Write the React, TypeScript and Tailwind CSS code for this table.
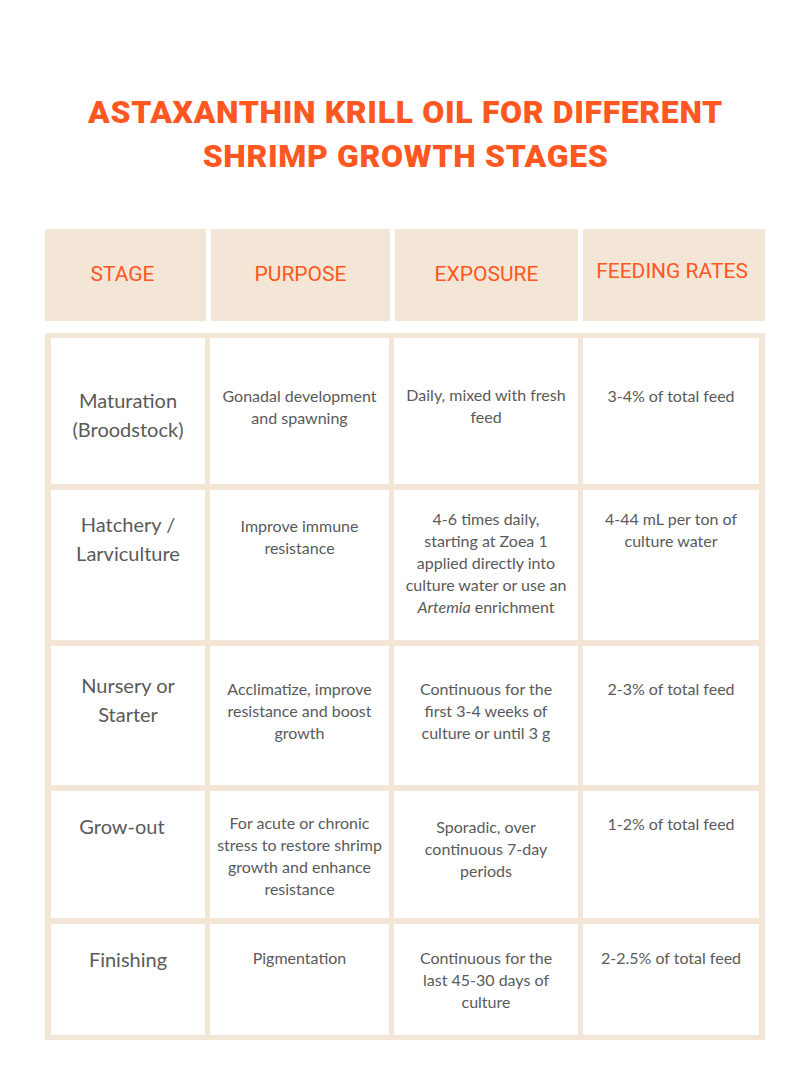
import React from 'react';

type Row = {
  stage: React.ReactNode;
  stagePad: string;
  cells: { text: React.ReactNode; pad: string }[];
  height: string;
};

const rows: Row[] = [
  {
    stage: <>Maturation<br />(Broodstock)</>,
    stagePad: 'pt-[48px]',
    height: 'h-[146px]',
    cells: [
      { text: <>Gonadal development<br />and spawning</>, pad: 'pt-[47px]' },
      { text: <>Daily, mixed with fresh<br />feed</>, pad: 'pt-[46px]' },
      { text: <>3-4% of total feed</>, pad: 'pt-[47px]' },
    ],
  },
  {
    stage: <>Hatchery /<br />Larviculture</>,
    stagePad: 'pt-[20px]',
    height: 'h-[150px]',
    cells: [
      { text: <>Improve immune<br />resistance</>, pad: 'pt-[25px]' },
      {
        text: (
          <>
            4-6 times daily,<br />starting at Zoea 1<br />applied directly into<br />culture water or use an<br />
            <i>Artemia</i> enrichment
          </>
        ),
        pad: 'pt-[18px]',
      },
      { text: <>4-44 mL per ton of<br />culture water</>, pad: 'pt-[18px]' },
    ],
  },
  {
    stage: <>Nursery or<br />Starter</>,
    stagePad: 'pt-[25px]',
    height: 'h-[139px]',
    cells: [
      { text: <>Acclimatize, improve<br />resistance and boost<br />growth</>, pad: 'pt-[32px]' },
      { text: <>Continuous for the<br />first 3-4 weeks of<br />culture or until 3 g</>, pad: 'pt-[32px]' },
      { text: <>2-3% of total feed</>, pad: 'pt-[32px]' },
    ],
  },
  {
    stage: <span className="pr-[12px]">Grow-out</span>,
    stagePad: 'pt-[21px]',
    height: 'h-[127px]',
    cells: [
      {
        text: <>For acute or chronic<br />stress to restore shrimp<br />growth and enhance<br />resistance</>,
        pad: 'pt-[21px]',
      },
      { text: <>Sporadic, over<br />continuous 7-day<br />periods</>, pad: 'pt-[25px]' },
      { text: <>1-2% of total feed</>, pad: 'pt-[22px]' },
    ],
  },
  {
    stage: <>Finishing</>,
    stagePad: 'pt-[21px]',
    height: 'h-[111px]',
    cells: [
      { text: <>Pigmentation</>, pad: 'pt-[23px]' },
      { text: <>Continuous for the<br />last 45-30 days of<br />culture</>, pad: 'pt-[23px]' },
      { text: <>2-2.5% of total feed</>, pad: 'pt-[23px]' },
    ],
  },
];

const headers = [
  { label: 'STAGE', w: 'w-[161px]', extra: 'pr-[6px]' },
  { label: 'PURPOSE', w: 'w-[179px]', extra: '' },
  { label: 'EXPOSURE', w: 'w-[183px]', extra: '' },
  { label: 'FEEDING RATES', w: 'w-[182px]', extra: 'pb-[6px] pr-[4px]' },
];

export default function App() {
  return (
    <main className="w-[800px] h-[1084px] bg-white overflow-hidden">
      <div className="ml-[45px] w-[721px] pt-[90px]">
        <h1 className="text-center text-[32px] leading-[44px] font-black tracking-[0.02em] text-[#ff5722] font-['Roboto',sans-serif]">
          ASTAXANTHIN KRILL OIL FOR DIFFERENT
          <br />
          SHRIMP GROWTH STAGES
        </h1>

        <div className="mt-[51px] flex gap-[5px] h-[92px]">
          {headers.map(h => (
            <div
              key={h.label}
              className={`${h.w} ${h.extra} bg-[#f4e6d7] flex items-center justify-center text-[21px] text-[#ff5722] font-['Roboto',sans-serif]`}
            >
              {h.label}
            </div>
          ))}
        </div>

        <div className="mt-[12px] w-[720px] bg-[#f4e6d7] pt-[5px] pb-[5px] pl-[6px] pr-[5px] flex flex-col gap-[6px] text-[#5a5a5a] font-['Lato',sans-serif]">
          {rows.map((row, i) => (
            <div key={i} className={`${row.height} grid grid-cols-[154px_179px_184px_176px] gap-x-[5px]`}>
              <div className={`bg-white text-center text-[20px] leading-[29px] ${row.stagePad}`}>{row.stage}</div>
              {row.cells.map((c, j) => (
                <div key={j} className={`bg-white text-center text-[16px] leading-[22px] ${c.pad}`}>
                  {c.text}
                </div>
              ))}
            </div>
          ))}
        </div>
      </div>
    </main>
  );
}
